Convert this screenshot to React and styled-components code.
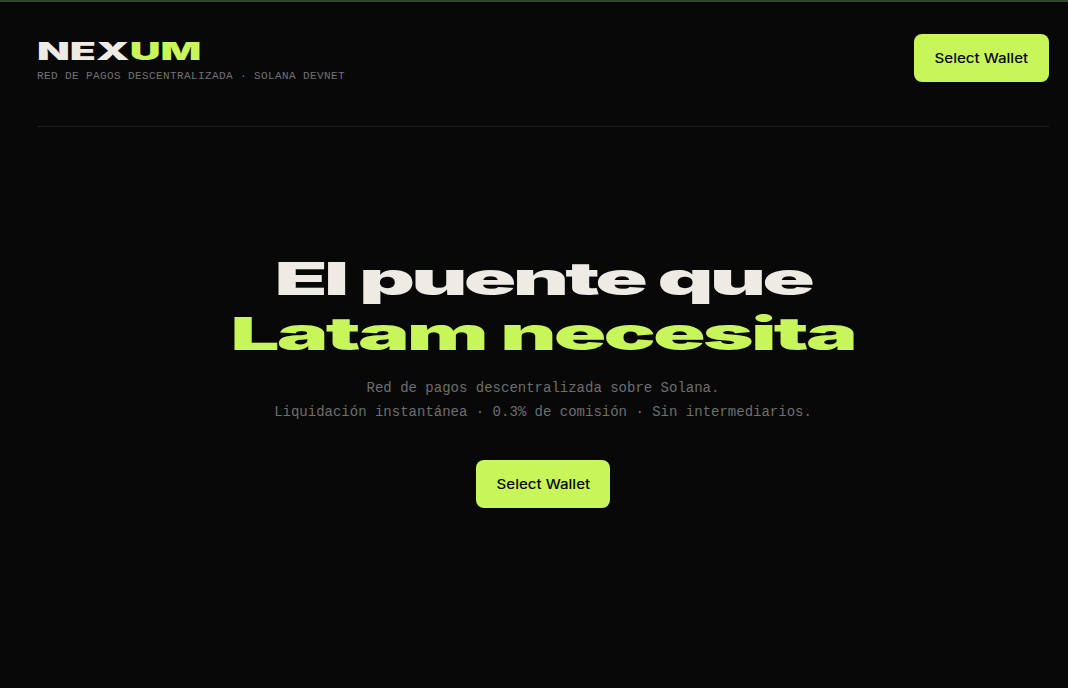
import React from "react";
import styled, { createGlobalStyle } from "styled-components";

const lime = "#c8f65a";
const bone = "#edebe4";
const wide = `Inter, "Liberation Sans", sans-serif`;
const mono = `"Liberation Mono", "DejaVu Sans Mono", monospace`;

const GlobalStyle = createGlobalStyle`
  html, body {
    margin: 0;
    padding: 0;
    background: #080808;
  }
`;

const Page = styled.div`
  height: 688px;
  box-sizing: border-box;
  background: #080808;
  border-top: 2px solid #33462e;
  padding: 0 19px 0 37px;
  overflow: hidden;
  display: flex;
  flex-direction: column;
`;

const Header = styled.header`
  height: 125px;
  box-sizing: border-box;
  border-bottom: 1px solid #1f1f1f;
  display: flex;
  justify-content: space-between;
  align-items: flex-start;
  padding-top: 32px;
`;

const Brand = styled.div`
  display: flex;
  flex-direction: column;
  align-items: flex-start;
`;

const Logo = styled.div`
  font-family: ${wide};
  font-weight: 900;
  font-size: 24px;
  line-height: 30px;
  margin-top: 3px;
  color: ${bone};
  transform: scaleX(1.78);
  transform-origin: left center;
`;

const LogoAccent = styled.span`
  color: ${lime};
`;

const Tagline = styled.div`
  font-family: ${mono};
  font-size: 11px;
  line-height: 14px;
  letter-spacing: 0.4px;
  margin-top: 2px;
  color: #727272;
`;

const WalletButton = styled.button`
  width: ${(p) => p.$width}px;
  height: 48px;
  border: 0;
  border-radius: 8px;
  background: ${lime};
  color: #080808;
  font-family: ${wide};
  font-weight: 500;
  font-size: 13px;
  padding: 0;
`;

const ButtonLabel = styled.span`
  display: inline-block;
  transform: scaleX(1.16);
`;

const Hero = styled.main`
  display: flex;
  flex-direction: column;
  align-items: center;
  padding-top: 124px;
`;

const Title = styled.h1`
  margin: 0;
  text-align: center;
  font-family: ${wide};
  font-weight: 900;
  font-size: 45px;
  line-height: 55px;
  transform: scaleX(1.93);
`;

const TitleLine = styled.div`
  color: ${(p) => (p.$accent ? lime : bone)};
  letter-spacing: ${(p) => (p.$accent ? "-1.5px" : "-2px")};
  white-space: nowrap;
`;

const Lead = styled.p`
  margin: 15px 0 0;
  text-align: center;
  font-family: ${mono};
  font-size: 14px;
  line-height: 24px;
  color: #6e6e6e;
`;

const HeroAction = styled.div`
  margin-top: 36px;
`;

export default function App() {
  return (
    <>
      <GlobalStyle />
      <Page>
        <Header>
          <Brand>
            <Logo>
              NEX<LogoAccent>UM</LogoAccent>
            </Logo>
            <Tagline>RED DE PAGOS DESCENTRALIZADA · SOLANA DEVNET</Tagline>
          </Brand>
          <WalletButton $width={135}>
            <ButtonLabel>Select Wallet</ButtonLabel>
          </WalletButton>
        </Header>
        <Hero>
          <Title>
            <TitleLine>El puente que</TitleLine>
            <TitleLine $accent>Latam necesita</TitleLine>
          </Title>
          <Lead>
            Red de pagos descentralizada sobre Solana.
            <br />
            Liquidación instantánea · 0.3% de comisión · Sin intermediarios.
          </Lead>
          <HeroAction>
            <WalletButton $width={134}>
              <ButtonLabel>Select Wallet</ButtonLabel>
            </WalletButton>
          </HeroAction>
        </Hero>
      </Page>
    </>
  );
}
